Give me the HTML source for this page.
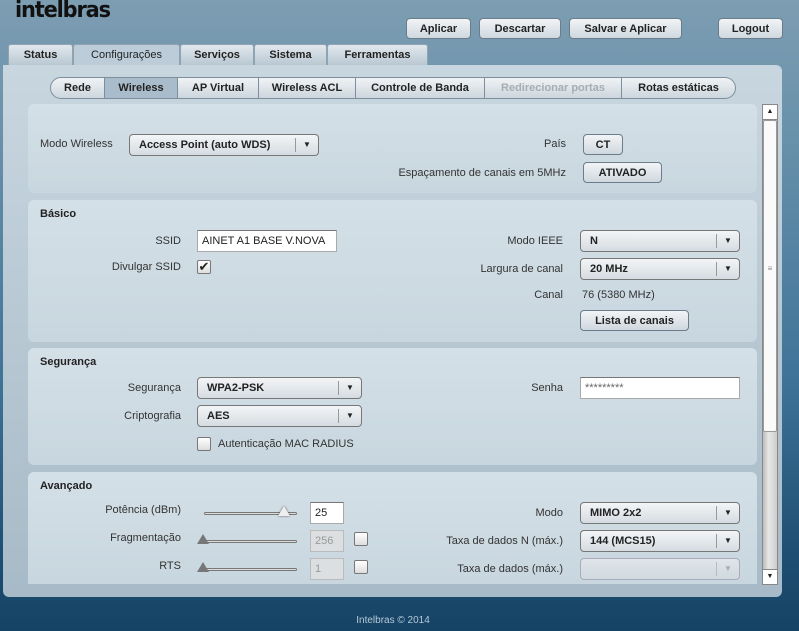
<!DOCTYPE html>
<html><head><meta charset="utf-8"><style>
*{box-sizing:border-box;margin:0;padding:0}
body{width:799px;height:631px;overflow:hidden;position:relative;font-family:"Liberation Sans","DejaVu Sans",sans-serif;font-size:11px;color:#333;background:linear-gradient(180deg,#7d9db2 0%,#6a92ab 20%,#3f7398 60%,#1c4c70 90%,#154366 100%)}
.a{position:absolute}
.logo{left:15px;top:-2px;font:bold 22px "DejaVu Sans",sans-serif;color:#111;letter-spacing:-1.2px;transform:scaleX(0.95);transform-origin:left}
.btn{position:absolute;height:21px;border:1px solid #6b7d8a;border-radius:4px;background:linear-gradient(#f2f4f6,#cfd8df);font-weight:bold;font-size:11px;color:#222;text-align:center;line-height:20px}
.tab{position:absolute;top:44px;height:22px;border:1px solid #8fa4b3;border-bottom:none;border-radius:3px 3px 0 0;background:linear-gradient(#e2e8ed,#b7c6d1);font-weight:bold;text-align:center;line-height:21px;color:#222}
.tab.on{background:#bccdd9;top:44px;height:22px;font-weight:normal;color:#222}
.panel{left:3px;top:65px;width:779px;height:532px;background:linear-gradient(#c8d6df,#a7bac7);border-radius:0 6px 6px 6px}
.st{position:absolute;top:77px;height:22px;border:1px solid #7d8f9c;border-left:none;background:linear-gradient(#f0f3f5,#ccd6dd);font-weight:bold;text-align:center;line-height:20px;color:#222}
.sec{position:absolute;left:28px;width:729px;background:linear-gradient(#d4e0e7,#c8d6df);border-radius:6px}
.lb{position:absolute;text-align:right;color:#333}
.h{position:absolute;left:12px;font-weight:bold;color:#222}
.sel{position:absolute;height:22px;border:1px solid #777;border-radius:4px;background:linear-gradient(#f3f5f7,#d5dce1);font-weight:bold;line-height:20px;padding-left:9px;color:#222}
.sel:after{content:"▼";position:absolute;right:0;top:3px;width:22px;height:14px;border-left:1px solid #999;font-size:8px;line-height:14px;text-align:center;color:#222}
.sel.dis{border-color:#aab;background:linear-gradient(#dfe5e9,#d0d9df)}
.sel.dis:after{color:#aaa;border-color:#bbb}
.inp{position:absolute;height:22px;background:#fff;border:1px solid #aaa;border-top-color:#777;padding-left:4px;line-height:20px;color:#222}
.inp.dis{background:#dcdfe1;color:#999;border-color:#bbb}
.cb{position:absolute;width:14px;height:14px;border:1px solid #777;background:linear-gradient(#fff,#ddd);border-radius:2px}
.track{position:absolute;height:3px;border:1px solid #777;border-radius:2px;background:#ddd}
</style></head><body>
<div class="a logo">intelbras</div>
<div class="btn" style="left:406px;top:18px;width:65px">Aplicar</div>
<div class="btn" style="left:479px;top:18px;width:82px">Descartar</div>
<div class="btn" style="left:569px;top:18px;width:113px">Salvar e Aplicar</div>
<div class="btn" style="left:718px;top:18px;width:65px">Logout</div>

<div class="tab" style="left:8px;width:65px">Status</div>
<div class="tab on" style="left:73px;width:107px">Configurações</div>
<div class="tab" style="left:180px;width:74px">Serviços</div>
<div class="tab" style="left:254px;width:73px">Sistema</div>
<div class="tab" style="left:327px;width:101px">Ferramentas</div>

<div class="a panel"></div>
<div class="st" style="left:50px;width:55px;border-left:1px solid #7d8f9c;border-radius:11px 0 0 11px">Rede</div>
<div class="st" style="left:105px;width:73px;background:#a9bccb">Wireless</div>
<div class="st" style="left:178px;width:81px">AP Virtual</div>
<div class="st" style="left:259px;width:97px">Wireless ACL</div>
<div class="st" style="left:356px;width:129px">Controle de Banda</div>
<div class="st" style="left:485px;width:137px;color:#a6aeb4">Redirecionar portas</div>
<div class="st" style="left:622px;width:114px;border-radius:0 11px 11px 0">Rotas estáticas</div>

<div class="sec" style="top:104px;height:89px">
 <div class="lb" style="left:12px;top:34px">Modo Wireless</div>
 <div class="sel" style="left:101px;top:30px;width:190px">Access Point (auto WDS)</div>
 <div class="lb" style="left:440px;top:34px;width:98px">País</div>
 <div class="btn" style="left:555px;top:30px;width:40px">CT</div>
 <div class="lb" style="left:340px;top:63px;width:198px">Espaçamento de canais em 5MHz</div>
 <div class="btn" style="left:555px;top:58px;width:79px">ATIVADO</div>
</div>

<div class="sec" style="top:200px;height:142px">
 <div class="h" style="top:8px">Básico</div>
 <div class="lb" style="left:60px;top:35px;width:93px">SSID</div>
 <div class="inp" style="left:169px;top:30px;width:140px">AINET A1 BASE V.NOVA</div>
 <div class="lb" style="left:40px;top:61px;width:113px">Divulgar SSID</div>
 <div class="cb" style="left:169px;top:60px;text-align:center;font-size:13px;line-height:12px;color:#222">✔</div>
 <div class="lb" style="left:400px;top:35px;width:135px">Modo IEEE</div>
 <div class="sel" style="left:552px;top:30px;width:160px">N</div>
 <div class="lb" style="left:400px;top:63px;width:135px">Largura de canal</div>
 <div class="sel" style="left:552px;top:58px;width:160px">20 MHz</div>
 <div class="lb" style="left:400px;top:89px;width:135px">Canal</div>
 <div class="a" style="left:554px;top:89px">76 (5380 MHz)</div>
 <div class="btn" style="left:552px;top:110px;width:109px">Lista de canais</div>
</div>

<div class="sec" style="top:348px;height:117px">
 <div class="h" style="top:8px">Segurança</div>
 <div class="lb" style="left:60px;top:34px;width:93px">Segurança</div>
 <div class="sel" style="left:169px;top:29px;width:165px">WPA2-PSK</div>
 <div class="lb" style="left:60px;top:62px;width:93px">Criptografia</div>
 <div class="sel" style="left:169px;top:57px;width:165px">AES</div>
 <div class="cb" style="left:169px;top:89px"></div>
 <div class="a" style="left:190px;top:90px">Autenticação MAC RADIUS</div>
 <div class="lb" style="left:400px;top:34px;width:135px">Senha</div>
 <div class="inp" style="left:552px;top:29px;width:160px;color:#666">*********</div>
</div>

<div class="sec" style="top:472px;height:112px;border-radius:6px 6px 0 0">
 <div class="h" style="top:8px">Avançado</div>
 <div class="lb" style="left:40px;top:32px;width:113px">Potência (dBm)</div>
 <div class="track" style="left:176px;top:40px;width:93px"></div>
 <div class="a" style="left:250px;top:34px;width:0;height:0;border-left:6px solid transparent;border-right:6px solid transparent;border-bottom:10px solid #eee;filter:drop-shadow(0 0 1px #555)"></div>
 <div class="inp" style="left:282px;top:30px;width:34px">25</div>
 <div class="lb" style="left:40px;top:60px;width:113px">Fragmentação</div>
 <div class="track" style="left:172px;top:68px;width:97px"></div>
 <div class="a" style="left:169px;top:62px;width:0;height:0;border-left:6px solid transparent;border-right:6px solid transparent;border-bottom:10px solid #777"></div>
 <div class="inp dis" style="left:282px;top:58px;width:34px">256</div>
 <div class="cb" style="left:326px;top:60px"></div>
 <div class="lb" style="left:40px;top:88px;width:113px">RTS</div>
 <div class="track" style="left:172px;top:96px;width:97px"></div>
 <div class="a" style="left:169px;top:90px;width:0;height:0;border-left:6px solid transparent;border-right:6px solid transparent;border-bottom:10px solid #777"></div>
 <div class="inp dis" style="left:282px;top:86px;width:34px">1</div>
 <div class="cb" style="left:326px;top:88px"></div>
 <div class="lb" style="left:400px;top:35px;width:135px">Modo</div>
 <div class="sel" style="left:552px;top:30px;width:160px">MIMO 2x2</div>
 <div class="lb" style="left:400px;top:63px;width:135px">Taxa de dados N (máx.)</div>
 <div class="sel" style="left:552px;top:58px;width:160px">144 (MCS15)</div>
 <div class="lb" style="left:400px;top:91px;width:135px">Taxa de dados (máx.)</div>
 <div class="sel dis" style="left:552px;top:86px;width:160px"></div>
</div>

<div class="a" style="left:762px;top:104px;width:16px;height:481px;background:linear-gradient(90deg,#bbb,#e8e8e8 40%,#ccc);border:1px solid #888"></div>
<div class="a" style="left:762px;top:104px;width:16px;height:16px;background:#fff;border:1px solid #888;font-size:7px;text-align:center;line-height:14px;color:#222">▲</div>
<div class="a" style="left:763px;top:120px;width:14px;height:312px;background:#fafafa;border:1px solid #999;border-radius:2px;font-size:8px;color:#888;text-align:center;padding-top:146px;line-height:3px">≡</div>
<div class="a" style="left:762px;top:569px;width:16px;height:16px;background:#fff;border:1px solid #888;font-size:7px;text-align:center;line-height:14px;color:#222">▼</div>

<div class="a" style="left:0;top:615px;width:786px;text-align:center;color:#b8c9d6;font-size:10px">Intelbras © 2014</div>
</body></html>
